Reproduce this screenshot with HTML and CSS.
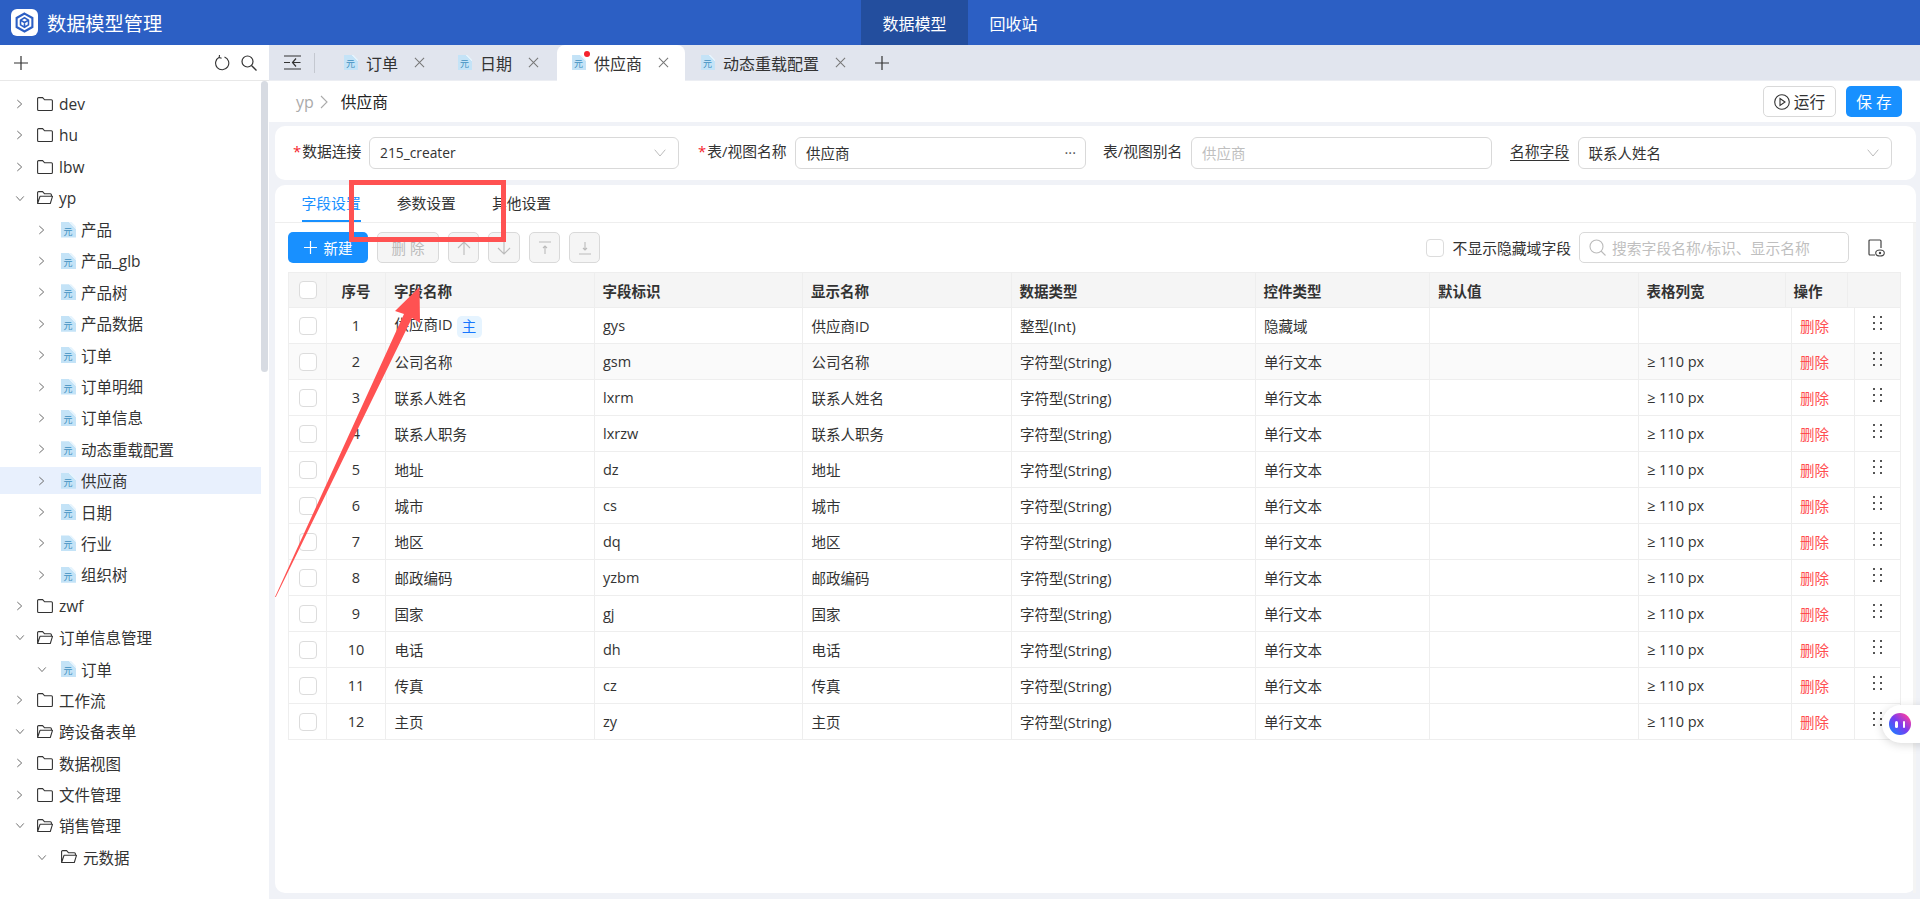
FILE: index.html
```html
<!DOCTYPE html>
<html lang="zh-CN">
<head>
<meta charset="utf-8">
<title>数据模型管理</title>
<link rel="stylesheet" href="styles.css">
</head>
<body>
<svg class="defs" width="0" height="0" aria-hidden="true">
  <symbol id="folder" viewBox="0 0 16 16">
    <path d="M.6 2.6a1 1 0 0 1 1-1h4l2 2.2h6.800a1 1 0 0 1 1 1v8.700a1 1 0 0 1-1 1H1.600a1 1 0 0 1-1-1Z" fill="none" stroke="#333" stroke-width="1.100"/>
  </symbol>
  <symbol id="open" viewBox="0 0 16 16">
    <path d="M.6 13V2.600a1 1 0 0 1 1-1h4l2 2.200h5.800a1 1 0 0 1 1 1V6.300M.6 13.500L3 6.300H15.500L13.300 13.500Z" fill="none" stroke="#333" stroke-width="1.100" stroke-linejoin="round"/>
  </symbol>
  <symbol id="right" viewBox="0 0 8 12"><path d="M1.500 1.500L6.500 6L1.500 10.500" fill="none" stroke="#666" stroke-width="1.100"/></symbol>
  <symbol id="down" viewBox="0 0 12 8"><path d="M1.500 1.500L6 6.500L10.500 1.500" fill="none" stroke="#666" stroke-width="1.100"/></symbol>
  <symbol id="close" viewBox="0 0 12 12"><path d="M1 1L11 11M11 1L1 11" fill="none" stroke="#777" stroke-width="1.100"/></symbol>
  <symbol id="caret" viewBox="0 0 12 8"><path d="M.7.700L6 7L11.300.700" fill="none" stroke="#bbb" stroke-width="1"/></symbol>
  <symbol id="grip" viewBox="0 0 9 14"><g fill="#555"><rect x="0" y="0" width="2" height="2"/><rect x="7" y="0" width="2" height="2"/><rect x="0" y="6" width="2" height="2"/><rect x="7" y="6" width="2" height="2"/><rect x="0" y="12" width="2" height="2"/><rect x="7" y="12" width="2" height="2"/></g></symbol>
</svg>

<header class="topbar">
  <div class="brand">
    <span class="logo">
      <svg width="21" height="21" viewBox="0 0 20 20"><path d="M10 1.500L17.500 5.700V14.300L10 18.500L2.500 14.300V5.700Z" fill="none" stroke="#2c5fc4" stroke-width="2"/><path d="M10 5.500L13.800 7.700V12.300L10 14.500L6.200 12.300V7.700ZM6.200 7.700L10 10L13.800 7.700M10 10V14.500" fill="none" stroke="#2c5fc4" stroke-width="1.500"/></svg>
    </span>
    <span class="brand-title">数据模型管理</span>
  </div>
  <nav class="topnav">
    <a class="topnav-item is-active">数据模型</a>
    <a class="topnav-item">回收站</a>
  </nav>
</header>

<div class="workspace">
  <aside class="sidebar">
    <div class="side-tools">
      <svg class="side-plus" width="14" height="14" viewBox="0 0 14 14"><path d="M7 0V14M0 7H14" stroke="#333" stroke-width="1.200"/></svg>
      <svg class="side-reload" width="16" height="16" viewBox="0 0 16 16"><path d="M5.200 2.300A6.600 6.600 0 1 0 10.500 2M5.500 0L5.200 2.500L7.600 3.300" fill="none" stroke="#333" stroke-width="1.100"/></svg>
      <svg class="side-search" width="16" height="16" viewBox="0 0 16 16"><circle cx="6.500" cy="6.500" r="5.500" fill="none" stroke="#333" stroke-width="1.200"/><path d="M10.500 10.500L15.500 15.500" stroke="#333" stroke-width="1.300"/></svg>
    </div>
    <div class="tree">
      <div class="node"><svg class="chev"><use href="#right"/></svg><svg class="fold"><use href="#folder"/></svg><span>dev</span></div>
      <div class="node"><svg class="chev"><use href="#right"/></svg><svg class="fold"><use href="#folder"/></svg><span>hu</span></div>
      <div class="node"><svg class="chev"><use href="#right"/></svg><svg class="fold"><use href="#folder"/></svg><span>lbw</span></div>
      <div class="node"><svg class="chev chev-d"><use href="#down"/></svg><svg class="fold"><use href="#open"/></svg><span>yp</span></div>
      <div class="node sub"><svg class="chev"><use href="#right"/></svg><span class="docic">元</span><span>产品</span></div>
      <div class="node sub"><svg class="chev"><use href="#right"/></svg><span class="docic">元</span><span>产品_glb</span></div>
      <div class="node sub"><svg class="chev"><use href="#right"/></svg><span class="docic">元</span><span>产品树</span></div>
      <div class="node sub"><svg class="chev"><use href="#right"/></svg><span class="docic">元</span><span>产品数据</span></div>
      <div class="node sub"><svg class="chev"><use href="#right"/></svg><span class="docic">元</span><span>订单</span></div>
      <div class="node sub"><svg class="chev"><use href="#right"/></svg><span class="docic">元</span><span>订单明细</span></div>
      <div class="node sub"><svg class="chev"><use href="#right"/></svg><span class="docic">元</span><span>订单信息</span></div>
      <div class="node sub"><svg class="chev"><use href="#right"/></svg><span class="docic">元</span><span>动态重载配置</span></div>
      <div class="node sub is-selected"><svg class="chev"><use href="#right"/></svg><span class="docic">元</span><span>供应商</span></div>
      <div class="node sub"><svg class="chev"><use href="#right"/></svg><span class="docic">元</span><span>日期</span></div>
      <div class="node sub"><svg class="chev"><use href="#right"/></svg><span class="docic">元</span><span>行业</span></div>
      <div class="node sub"><svg class="chev"><use href="#right"/></svg><span class="docic">元</span><span>组织树</span></div>
      <div class="node"><svg class="chev"><use href="#right"/></svg><svg class="fold"><use href="#folder"/></svg><span>zwf</span></div>
      <div class="node"><svg class="chev chev-d"><use href="#down"/></svg><svg class="fold"><use href="#open"/></svg><span>订单信息管理</span></div>
      <div class="node sub"><svg class="chev chev-d"><use href="#down"/></svg><span class="docic">元</span><span>订单</span></div>
      <div class="node"><svg class="chev"><use href="#right"/></svg><svg class="fold"><use href="#folder"/></svg><span>工作流</span></div>
      <div class="node"><svg class="chev chev-d"><use href="#down"/></svg><svg class="fold"><use href="#open"/></svg><span>跨设备表单</span></div>
      <div class="node"><svg class="chev"><use href="#right"/></svg><svg class="fold"><use href="#folder"/></svg><span>数据视图</span></div>
      <div class="node"><svg class="chev"><use href="#right"/></svg><svg class="fold"><use href="#folder"/></svg><span>文件管理</span></div>
      <div class="node"><svg class="chev chev-d"><use href="#down"/></svg><svg class="fold"><use href="#open"/></svg><span>销售管理</span></div>
      <div class="node sub"><svg class="chev chev-d"><use href="#down"/></svg><svg class="fold"><use href="#open"/></svg><span>元数据</span></div>
    </div>
    <div class="side-scroll"></div>
  </aside>

  <main class="main">
    <div class="tabbar">
      <svg class="collapse" width="17" height="15" viewBox="0 0 17 15"><path d="M0 1H17M0 14H17M0 7.500H6M16.500 7.500H9M12 3.500L8.500 7.500L12 11.500" fill="none" stroke="#333" stroke-width="1.200"/></svg>
      <span class="tab-sep"></span>
      <div class="tab tab-order"><span class="docic">元</span><span>订单</span><svg class="tab-x"><use href="#close"/></svg></div>
      <div class="tab tab-date"><span class="docic">元</span><span>日期</span><svg class="tab-x"><use href="#close"/></svg></div>
      <div class="tab tab-active"><span class="docic">元</span><i class="dot"></i><span>供应商</span><svg class="tab-x"><use href="#close"/></svg></div>
      <div class="tab tab-dyn"><span class="docic">元</span><span>动态重载配置</span><svg class="tab-x"><use href="#close"/></svg></div>
      <svg class="tab-add" width="14" height="14" viewBox="0 0 14 14"><path d="M7 0V14M0 7H14" stroke="#333" stroke-width="1.200"/></svg>
    </div>

    <div class="crumbs">
      <span class="crumb-parent">yp</span>
      <svg class="crumb-sep" width="8" height="14" viewBox="0 0 8 14"><path d="M1 1L7 7L1 13" fill="none" stroke="#aaa" stroke-width="1.100"/></svg>
      <span class="crumb-now">供应商</span>
      <button class="btn-run"><svg width="16" height="16" viewBox="0 0 16 16"><circle cx="8" cy="8" r="7.300" fill="none" stroke="#333" stroke-width="1.100"/><path d="M6 4.500L11 8L6 11.500Z" fill="none" stroke="#333" stroke-width="1.100"/></svg>运行</button>
      <button class="btn-save">保 存</button>
    </div>

    <section class="card form-card">
      <label class="lbl lbl-conn"><em>*</em>数据连接</label>
      <div class="ctl ctl-conn"><span class="latin">215_creater</span><svg class="caret"><use href="#caret"/></svg></div>
      <label class="lbl lbl-table"><em>*</em>表/视图名称</label>
      <div class="ctl ctl-table"><span>供应商</span><b class="more">···</b></div>
      <label class="lbl lbl-alias">表/视图别名</label>
      <div class="ctl ctl-alias"><span class="ph">供应商</span></div>
      <label class="lbl lbl-name">名称字段</label>
      <div class="ctl ctl-name"><span>联系人姓名</span><svg class="caret"><use href="#caret"/></svg></div>
    </section>

    <section class="card fields-card">
      <div class="subtabs">
        <span class="subtab is-on">字段设置</span>
        <span class="subtab">参数设置</span>
        <span class="subtab">其他设置</span>
      </div>
      <div class="fields-body">
        <div class="toolbar">
          <button class="btn-new"><svg width="13" height="13" viewBox="0 0 13 13"><path d="M6.500 0V13M0 6.500H13" stroke="#fff" stroke-width="1.200"/></svg>新建</button>
          <button class="btn-off btn-del">删 除</button>
          <button class="btn-off btn-sq"><svg width="14" height="14" viewBox="0 0 14 14"><path d="M7 14V1M1 7L7 1L13 7" fill="none" stroke="#bbb" stroke-width="1.100"/></svg></button>
          <button class="btn-off btn-sq btn-sq2"><svg width="14" height="14" viewBox="0 0 14 14"><path d="M7 0V13M1 7L7 13L13 7" fill="none" stroke="#bbb" stroke-width="1.100"/></svg></button>
          <button class="btn-off btn-sq"><svg width="14" height="14" viewBox="0 0 14 14"><path d="M1 1H13M7 13V5M5 7L7 5L9 7" fill="none" stroke="#bbb" stroke-width="1.100"/></svg></button>
          <button class="btn-off btn-sq"><svg width="14" height="14" viewBox="0 0 14 14"><path d="M1 13H13M7 1V9M5 7L7 9L9 7" fill="none" stroke="#bbb" stroke-width="1.100"/></svg></button>
          <span class="check check-hide"></span>
          <span class="hide-text">不显示隐藏域字段</span>
          <div class="search">
            <svg width="17" height="17" viewBox="0 0 17 17"><circle cx="7.500" cy="7.500" r="6.500" fill="none" stroke="#bbb" stroke-width="1.100"/><path d="M12 12L16.500 16.500" stroke="#bbb" stroke-width="1.100"/></svg>
            <span>搜索字段名称/标识、显示名称</span>
          </div>
          <svg class="eye" width="17" height="18" viewBox="0 0 17 18"><path d="M7 16H2a1 1 0 0 1-1-1V2a1 1 0 0 1 1-1h10a1 1 0 0 1 1 1V9" fill="none" stroke="#444" stroke-width="1.200"/><ellipse cx="12" cy="14" rx="4.300" ry="3" fill="#fff" stroke="#444" stroke-width="1.100"/><circle cx="12" cy="14" r="1.200" fill="#444"/></svg>
        </div>

        <table class="grid grid-head">
          <colgroup><col class="c1"><col class="c2"><col class="c3"><col class="c3"><col class="c3"><col class="c4"><col class="c5"><col class="c3"><col class="h9"><col class="h10"><col class="h11"></colgroup>
          <tr><th><span class="check"></span></th><th class="ctr">序号</th><th>字段名称</th><th>字段标识</th><th>显示名称</th><th>数据类型</th><th>控件类型</th><th>默认值</th><th>表格列宽</th><th>操作</th><th></th></tr>
        </table>
        <table class="grid grid-body">
          <colgroup><col class="c1"><col class="c2"><col class="c3"><col class="c3"><col class="c3"><col class="c4"><col class="c5"><col class="c3"><col class="b9"><col class="b10"><col class="b11"></colgroup>
          <tr class="r"><td><span class="check"></span></td><td class="ctr">1</td><td>供应商ID<span class="pk">主</span></td><td>gys</td><td>供应商ID</td><td>整型(Int)</td><td>隐藏域</td><td></td><td></td><td class="del">删除</td><td class="ctr"><svg class="grip"><use href="#grip"/></svg></td></tr>
          <tr class="r r-alt"><td><span class="check"></span></td><td class="ctr">2</td><td>公司名称</td><td>gsm</td><td>公司名称</td><td>字符型(String)</td><td>单行文本</td><td></td><td>≥ 110 px</td><td class="del">删除</td><td class="ctr"><svg class="grip"><use href="#grip"/></svg></td></tr>
          <tr class="r"><td><span class="check"></span></td><td class="ctr">3</td><td>联系人姓名</td><td>lxrm</td><td>联系人姓名</td><td>字符型(String)</td><td>单行文本</td><td></td><td>≥ 110 px</td><td class="del">删除</td><td class="ctr"><svg class="grip"><use href="#grip"/></svg></td></tr>
          <tr class="r"><td><span class="check"></span></td><td class="ctr">4</td><td>联系人职务</td><td>lxrzw</td><td>联系人职务</td><td>字符型(String)</td><td>单行文本</td><td></td><td>≥ 110 px</td><td class="del">删除</td><td class="ctr"><svg class="grip"><use href="#grip"/></svg></td></tr>
          <tr class="r"><td><span class="check"></span></td><td class="ctr">5</td><td>地址</td><td>dz</td><td>地址</td><td>字符型(String)</td><td>单行文本</td><td></td><td>≥ 110 px</td><td class="del">删除</td><td class="ctr"><svg class="grip"><use href="#grip"/></svg></td></tr>
          <tr class="r"><td><span class="check"></span></td><td class="ctr">6</td><td>城市</td><td>cs</td><td>城市</td><td>字符型(String)</td><td>单行文本</td><td></td><td>≥ 110 px</td><td class="del">删除</td><td class="ctr"><svg class="grip"><use href="#grip"/></svg></td></tr>
          <tr class="r"><td><span class="check"></span></td><td class="ctr">7</td><td>地区</td><td>dq</td><td>地区</td><td>字符型(String)</td><td>单行文本</td><td></td><td>≥ 110 px</td><td class="del">删除</td><td class="ctr"><svg class="grip"><use href="#grip"/></svg></td></tr>
          <tr class="r"><td><span class="check"></span></td><td class="ctr">8</td><td>邮政编码</td><td>yzbm</td><td>邮政编码</td><td>字符型(String)</td><td>单行文本</td><td></td><td>≥ 110 px</td><td class="del">删除</td><td class="ctr"><svg class="grip"><use href="#grip"/></svg></td></tr>
          <tr class="r"><td><span class="check"></span></td><td class="ctr">9</td><td>国家</td><td>gj</td><td>国家</td><td>字符型(String)</td><td>单行文本</td><td></td><td>≥ 110 px</td><td class="del">删除</td><td class="ctr"><svg class="grip"><use href="#grip"/></svg></td></tr>
          <tr class="r"><td><span class="check"></span></td><td class="ctr">10</td><td>电话</td><td>dh</td><td>电话</td><td>字符型(String)</td><td>单行文本</td><td></td><td>≥ 110 px</td><td class="del">删除</td><td class="ctr"><svg class="grip"><use href="#grip"/></svg></td></tr>
          <tr class="r"><td><span class="check"></span></td><td class="ctr">11</td><td>传真</td><td>cz</td><td>传真</td><td>字符型(String)</td><td>单行文本</td><td></td><td>≥ 110 px</td><td class="del">删除</td><td class="ctr"><svg class="grip"><use href="#grip"/></svg></td></tr>
          <tr class="r"><td><span class="check"></span></td><td class="ctr">12</td><td>主页</td><td>zy</td><td>主页</td><td>字符型(String)</td><td>单行文本</td><td></td><td>≥ 110 px</td><td class="del">删除</td><td class="ctr"><svg class="grip"><use href="#grip"/></svg></td></tr>
        </table>
      </div>
    </section>
  </main>
</div>

<div class="assistant"><span class="ball"><i></i><i></i></span></div>

<svg class="markup" width="1920" height="899" viewBox="0 0 1920 899">
  <rect x="351.500" y="182.500" width="152" height="57" fill="none" stroke="#ff5252" stroke-width="5"/>
  <path d="M419.500 287L420 323L412 318L275.800 597L275 597L404 314L395 311Z" fill="#ff5252"/>
</svg>
</body>
</html>
```
FILE: styles.css
```css
* { box-sizing: border-box; }
html, body { margin: 0; height: 899px; overflow: hidden; }
body {
  position: relative;
  display: flex;
  flex-direction: column;
  font-family: "Open Sans", "Noto Sans CJK SC", sans-serif;
  font-size: 14.5px;
  color: #333;
  background: #f0f2f7;
}
svg { display: block; flex: none; }
.defs { position: absolute; }

/* page glyph with the fold in its top right corner */
.docic {
  flex: none;
  width: 15px;
  height: 16px;
  margin-right: 5px;
  padding: 4px 1px 0 0;
  font-family: "Noto Sans CJK SC", sans-serif;
  font-size: 9px;
  line-height: 11px;
  text-align: center;
  color: #3d8fc0;
  background: linear-gradient(225deg, #e6f4fd 0 23%, #c4e3f7 23%);
  clip-path: polygon(0 0, 68% 0, 100% 31%, 100% 100%, 0 100%);
}

/* top bar */
.topbar {
  height: 45px;
  flex: none;
  display: flex;
  align-items: stretch;
  background: #2c5fc4;
  color: #fff;
  position: relative;
}
.brand { display: flex; align-items: center; padding-left: 11px; width: 861px; }
.logo {
  width: 27px; height: 27px;
  border-radius: 6px;
  background: #fff;
  display: flex; align-items: center; justify-content: center;
}
.brand-title { margin-left: 9px; font-size: 19.200px; }
.topnav { display: flex; }
.topnav-item { display: flex; align-items: center; font-size: 16px; padding: 0 21.500px; }
.topnav-item.is-active { background: #234e9e; }

.workspace { flex: 1; display: flex; min-height: 0; }

/* sidebar */
.sidebar { width: 269px; flex: none; background: #fff; position: relative; overflow: hidden; }
.side-tools {
  height: 36px;
  border-bottom: 1px solid #e8e8e8;
  display: flex;
  align-items: center;
  padding-left: 14px;
}
.side-reload { margin-left: 186px; }
.side-search { margin-left: 11px; }
.tree { padding-top: 9.200px; width: 261px; font-size: 15.500px; }
.node {
  height: 27.600px;
  margin-bottom: 3.800px;
  display: flex;
  align-items: center;
  padding-left: 16px;
  white-space: nowrap;
}
.node.sub { padding-left: 38px; }
.node.is-selected { background: #e8f0fd; }
.chev { width: 7px; height: 12px; margin-right: 14px; }
.node.sub .chev { margin-right: 16px; }
.chev-d { width: 10px; height: 7px; margin-left: -1px; margin-right: 12px; }
.node.sub .chev-d { margin-right: 14px; }
.fold { width: 16px; height: 16px; margin-right: 6px; }
.side-scroll {
  position: absolute;
  left: 261px; top: 36px;
  width: 7px; height: 291px;
  border-radius: 4px;
  background: #d7dbe2;
}

/* main column */
.main { flex: 1; min-width: 0; display: flex; flex-direction: column; }
.tabbar {
  height: 36px;
  flex: none;
  background: #e1e5ee;
  border-bottom: 1px solid #eceef3;
  display: flex;
  align-items: center;
  font-size: 16px;
  padding-left: 15px;
  position: relative;
}
.collapse { margin-right: 13px; }
.tab-sep { width: 1px; height: 20px; background: #c4c8d0; }
.tab {
  height: 36px;
  display: flex;
  align-items: center;
  position: relative;
  white-space: nowrap;
}
.tab .docic { width: 14px; height: 15px; margin-right: 8px; padding-top: 3px; }
.tab-x { width: 11px; height: 11px; margin-left: 16px; }
.tab-order { margin-left: 29px; }
.tab-date { margin-left: 33px; }
.tab-active {
  margin-left: 18px;
  padding: 0 16px 0 15px;
  background: #fff;
  border-radius: 8px 8px 0 0;
}
.tab-dyn { margin-left: 16px; }
.tab-add { margin-left: 29px; }
.dot {
  position: absolute;
  left: 27px; top: 6px;
  width: 6px; height: 6px;
  border-radius: 50%;
  background: #f5222d;
}

.crumbs {
  height: 41px;
  flex: none;
  background: #fff;
  display: flex;
  align-items: center;
  padding-left: 27px;
  font-size: 15.700px;
}
.crumb-parent { color: #aaa; font-size: 16px; }
.crumb-sep { margin: 0 13px 0 6px; }
.crumb-now { color: #222; }
.btn-run, .btn-save {
  height: 31px;
  border-radius: 5px;
  font: inherit;
  padding: 0;
  display: flex;
  align-items: center;
  justify-content: center;
}
.btn-run {
  margin-left: auto;
  width: 73px;
  gap: 4px;
  background: #fff;
  border: 1px solid #d9d9d9;
  color: #333;
}
.btn-save {
  width: 56px;
  margin: 0 18px 0 10px;
  background: #1890ff;
  border: 0;
  color: #fff;
}

.card { background: #fff; border-radius: 10px; margin-left: 6px; margin-right: 4px; }
.form-card {
  height: 54px;
  margin-top: 4px;
  flex: none;
  display: flex;
  align-items: center;
  padding-left: 18px;
}
.lbl { flex: none; font-size: 14.800px; white-space: nowrap; margin-top: -5px; margin-right: 8px; }
.lbl em { color: #f5222d; font-style: normal; margin-right: 1px; }
.lbl-conn { width: 68px; }
.lbl-table { width: 89px; margin-left: 19px; }
.lbl-alias { width: 80px; margin-left: 17px; }
.lbl-name { width: 58.500px; margin-left: 18px; margin-right: 9px; text-decoration: underline; text-underline-offset: 3px; }
.ctl {
  height: 32px;
  border: 1px solid #d9d9d9;
  border-radius: 6px;
  display: flex;
  align-items: center;
  justify-content: space-between;
  padding: 0 9px 2px 10px;
  flex: none;
}
.latin { font-size: 13.800px; }
.ctl-conn { width: 310px; }
.ctl-table { width: 291px; }
.ctl-alias { width: 301px; }
.ctl-name { width: 314.500px; }
.ph { color: #bfbfbf; }
.caret { width: 12px; height: 8px; margin-right: 3px; margin-top: 2px; }
.more { font-weight: 400; color: #555; letter-spacing: 0; }

.fields-card {
  margin-top: 5px;
  flex: 1;
  margin-bottom: 6px;
  display: flex;
  flex-direction: column;
  min-height: 0;
}
.subtabs {
  height: 38px;
  flex: none;
  border-bottom: 1px solid #eeeeee;
  display: flex;
  padding-left: 26.500px;
  gap: 36px;
  font-size: 14.800px;
}
.subtab { height: 37px; line-height: 37px; }
.subtab.is-on { color: #1890ff; border-bottom: 2px solid #1890ff; }
.fields-body { flex: 1; padding: 9px 14px 0 13px; border-right: 3px solid #f4f4f4; }
.toolbar { display: flex; align-items: center; height: 31px; margin-bottom: 9px; }
.toolbar button { height: 31px; border-radius: 5px; padding: 0; font: inherit; display: flex; align-items: center; justify-content: center; }
.btn-new { width: 80px; background: #1890ff; border: 0; color: #fff; gap: 7px; margin-right: 9px; }
.btn-off { background: #f5f5f5; border: 1px solid #d9d9d9; color: #bbb; }
.btn-del { width: 62px; margin-right: 9px; }
.btn-sq { width: 31px; margin-right: 9px; }
.btn-sq2 { width: 32px; }
.check {
  display: block;
  width: 18px; height: 18px;
  border: 1px solid #dcdcdc;
  border-radius: 4px;
  background: #fff;
  margin: 0 auto;
}
.check-hide { margin: 0 9px 0 auto; flex: none; }
.hide-text { white-space: nowrap; margin-right: 8px; font-size: 14.800px; }
.search {
  width: 270px; height: 31px;
  border: 1px solid #d9d9d9;
  border-radius: 5px;
  display: flex;
  align-items: center;
  gap: 6px;
  padding-left: 9px;
  color: #bfbfbf;
  font-size: 14.800px;
}
.eye { margin-left: 19px; margin-right: 14px; }

.grid { border-collapse: collapse; table-layout: fixed; width: 1611px; }
.c1 { width: 38px; }
.c2 { width: 59px; }
.c3 { width: 208.500px; }
.c4 { width: 244px; }
.c5 { width: 174.500px; }
.h9 { width: 147px; }
.h10 { width: 62.500px; }
.h11 { width: 52.500px; }
.b9 { width: 153px; }
.b10 { width: 63.500px; }
.b11 { width: 45.500px; }
.grid th, .grid td { border: 1px solid #eeeeee; padding: 0 0 0 8.500px; text-align: left; white-space: nowrap; }
.grid th { padding-left: 8px; }
.grid th:first-child, .grid td:first-child { padding: 0; }
.grid th { height: 35px; background: #f5f5f5; font-weight: 700; }
.grid td { height: 36px; }
.grid .ctr { text-align: center; padding: 0; }
.grid-body { margin-top: -1px; }
.r-alt td { background: #fafafa; }
.pk {
  display: inline-block;
  width: 25px; height: 22px;
  margin-left: 4px;
  line-height: 22px;
  text-align: center;
  border-radius: 5px;
  background: #e6f4ff;
  color: #1677ff;
  vertical-align: middle;
}
.del { color: #ff4d4f; }
.grip { width: 9px; height: 14px; margin: -5px auto 0; }

.assistant {
  position: absolute;
  left: 1882px; top: 705px;
  width: 60px; height: 38px;
  border-radius: 19px;
  background: #fff;
  box-shadow: 0 2px 10px rgba(0, 0, 0, .15);
}
.ball {
  position: absolute;
  left: 7px; top: 8px;
  width: 22px; height: 22px;
  border-radius: 50%;
  background: linear-gradient(45deg, #1e7bff 10%, #7a3cf0 50%, #ff3fa0 90%);
  display: flex;
  align-items: center;
  justify-content: center;
  gap: 5px;
  filter: blur(.5px);
}
.ball i { width: 2.500px; height: 7px; border-radius: 2px; background: #fff; }

.markup { position: absolute; left: 0; top: 0; pointer-events: none; }
```
